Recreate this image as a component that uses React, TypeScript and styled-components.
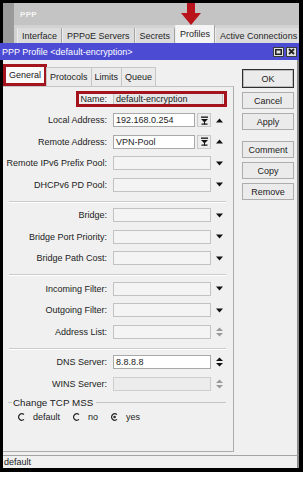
import React from "react";
import styled, { createGlobalStyle } from "styled-components";

const Global = createGlobalStyle`
  html, body { margin: 0; padding: 0; background: #ffffff; }
  body {
    font-family: "Liberation Sans", Arial, sans-serif;
    font-size: 9px;
    color: #222;
  }
  * { box-sizing: border-box; }
`;

const Frame = styled.div`
  position: relative;
  width: 303px;
  height: 472px;
  border: 3px solid #000;
  border-right-width: 4px;
  border-bottom-width: 4px;
  display: flex;
  flex-direction: column;
  background: #f0f0f0;
`;

const Header = styled.div`
  position: relative;
  display: flex;
  height: 40px;
  flex: none;
`;

const SideStrip = styled.div`
  width: 11px;
  background: #9a9a9a;
`;

const HeaderMain = styled.div`
  flex: 1;
  display: flex;
  flex-direction: column;
  background: #c4c4c4;
  overflow: hidden;
`;

const WinTitle = styled.div`
  height: 22px;
  display: flex;
  align-items: center;
  padding-left: 6px;
  color: #f4f4f4;
  font-weight: bold;
  font-size: 8px;
  letter-spacing: 0.3px;
`;

const MainTabs = styled.div`
  height: 18px;
  display: flex;
  align-items: flex-end;
  padding-left: 3px;
  background: #d2d2d2;
  white-space: nowrap;
`;

const MainTab = styled.div<{ $active?: boolean }>`
  height: ${(p) => (p.$active ? 18 : 15)}px;
  display: flex;
  align-items: center;
  padding: 0 4px;
  border-left: 1px solid #ececec;
  border-right: 1px solid #a4a4a4;
  background: ${(p) => (p.$active ? "#f4f4f4" : "#dcdcdc")};
  color: #262626;
  flex: none;
`;

const ArrowMark = styled.svg`
  position: absolute;
  left: 178px;
  top: 0;
`;

const DialogTitle = styled.div`
  height: 17px;
  flex: none;
  margin-left: -3px;
  background: #4b4bd4;
  color: #ffffff;
  display: flex;
  align-items: center;
  padding: 0 2px 0 2px;
`;

const TitleText = styled.span`
  flex: 1;
  white-space: nowrap;
`;

const WinButton = styled.div`
  width: 11px;
  height: 10px;
  border: 1px solid #3c3c3c;
  background: #e2e2e2;
  display: flex;
  align-items: center;
  justify-content: center;
  margin-left: 2px;
`;

const Body = styled.div`
  flex: 1;
  display: flex;
  min-height: 0;
  border-right: 2px solid #8c8c8c;
`;

const LeftPane = styled.div`
  width: 231px;
  flex: none;
  display: flex;
  flex-direction: column;
  padding-bottom: 3px;
`;

const DTabs = styled.div`
  display: flex;
  align-items: flex-end;
  height: 26px;
  flex: none;
`;

const DTab = styled.div<{ $selected?: boolean }>`
  display: flex;
  align-items: center;
  white-space: nowrap;
  height: ${(p) => (p.$selected ? 22 : 19)}px;
  padding: 0 3px;
  border: ${(p) => (p.$selected ? "3px solid #a3141f" : "1px solid #c6c6c6")};
  border-bottom: ${(p) => (p.$selected ? "3px solid #a3141f" : "none")};
  background: ${(p) => (p.$selected ? "#fbfbfb" : "#ebebeb")};
  margin-left: ${(p) => (p.$selected ? 0 : -1)}px;
`;

const Panel = styled.div`
  flex: 1;
  border-top: 1px solid #c4c4c4;
  border-right: 1px solid #acacac;
  border-bottom: 1px solid #acacac;
  padding-top: 1px;
  display: flex;
  flex-direction: column;
`;

const Row = styled.div`
  position: relative;
  display: flex;
  align-items: center;
  height: 21.5px;
  flex: none;
`;

const Label = styled.div`
  width: 104px;
  flex: none;
  text-align: right;
  white-space: nowrap;
`;

const FieldWrap = styled.div<{ $w: number }>`
  display: flex;
  margin-left: 6px;
  width: ${(p) => p.$w}px;
  gap: 2px;
  flex: none;
`;

type Tone = "white" | "empty" | "readonly" | "disabled";

const toneBg: Record<Tone, string> = {
  white: "#ffffff",
  empty: "#f4f4f4",
  readonly: "#e6e6e6",
  disabled: "#ececec",
};
const toneBorder: Record<Tone, string> = {
  white: "#a9a9a9",
  empty: "#c2c2c2",
  readonly: "#c2c2c2",
  disabled: "#cdcdcd",
};

const Field = styled.div<{ $tone: Tone }>`
  flex: 1;
  height: 14px;
  border: 1px solid ${(p) => toneBorder[p.$tone]};
  background: ${(p) => toneBg[p.$tone]};
  padding-left: 2px;
  display: flex;
  align-items: center;
  white-space: nowrap;
  color: #1c1c1c;
`;

const ListBtn = styled.div`
  width: 14px;
  height: 14px;
  flex: none;
  border: 1px solid #c8c8c8;
  background: #ececec;
  display: flex;
  align-items: center;
  justify-content: center;
`;

const Trail = styled.div`
  width: 7px;
  margin-left: 5px;
  flex: none;
  display: flex;
  align-items: center;
  justify-content: center;
`;

const Annot = styled.div`
  position: absolute;
  left: 73px;
  top: 3px;
  width: 151px;
  height: 16px;
  border: 3px solid #a3141f;
  pointer-events: none;
`;

const Sep = styled.div`
  height: 1px;
  flex: none;
  background: #cbcbcb;
  margin: 5px 7px 3px 6px;
  box-shadow: 0 1px 0 #ffffff;
`;

const GroupHead = styled.div`
  display: flex;
  align-items: center;
  height: 14px;
  flex: none;
  margin-top: 1px;
  padding: 0 7px 0 5px;
`;

const GroupLine = styled.div<{ $w?: number }>`
  height: 1px;
  background: #c6c6c6;
  ${(p) => (p.$w ? `width: ${p.$w}px; flex: none;` : "flex: 1;")}
`;

const GroupTitle = styled.span`
  margin: 0 3px 0 1px;
  font-size: 9.8px;
  white-space: nowrap;
`;

const RadioRow = styled.div`
  display: flex;
  align-items: center;
  height: 15px;
  padding-left: 15px;
  gap: 13px;
`;

const RadioItem = styled.div`
  display: flex;
  align-items: center;
  gap: 8px;
`;

const RightPane = styled.div`
  flex: 1;
  display: flex;
  flex-direction: column;
  padding: 9px 3px 0 8px;
`;

const Btn = styled.div<{ $default?: boolean; $gap?: number }>`
  width: 52px;
  height: ${(p) => (p.$default ? 19 : 17)}px;
  margin-top: ${(p) => p.$gap ?? 0}px;
  border: 1px solid ${(p) => (p.$default ? "#2e2e2e" : "#adadad")};
  box-shadow: ${(p) => (p.$default ? "inset 0 0 0 1px #bcbcbc" : "none")};
  background: #ebebeb;
  display: flex;
  align-items: center;
  justify-content: center;
  color: #222;
`;

const Status = styled.div`
  height: 13px;
  flex: none;
  border-top: 1px solid #a4a4a4;
  border-right: 2px solid #8c8c8c;
  padding-left: 1px;
  display: flex;
  align-items: center;
`;

const UpTri = ({ c = "#111" }: { c?: string }) => (
  <svg width="7" height="5" viewBox="0 0 7 5">
    <polygon points="0,4.5 7,4.5 3.5,0.5" fill={c} />
  </svg>
);

const DownTri = ({ c = "#111" }: { c?: string }) => (
  <svg width="7" height="5" viewBox="0 0 7 5">
    <polygon points="0,0.5 7,0.5 3.5,4.5" fill={c} />
  </svg>
);

const Spin = ({ c = "#111" }: { c?: string }) => (
  <svg width="7" height="10" viewBox="0 0 7 10">
    <polygon points="0,4 7,4 3.5,0.5" fill={c} />
    <polygon points="0,6 7,6 3.5,9.5" fill={c} />
  </svg>
);

const ListIcon = () => (
  <svg width="7" height="9" viewBox="0 0 7 9">
    <rect x="0" y="0.5" width="7" height="1.3" fill="#111" />
    <polygon points="0,3 7,3 3.5,6.5" fill="#111" />
    <rect x="3" y="6" width="1" height="2.5" fill="#111" />
    <rect x="0.5" y="7.5" width="6" height="1.2" fill="#111" />
  </svg>
);

const RadioMark = ({ on }: { on?: boolean }) => (
  <svg width="7" height="8" viewBox="0 0 7 8">
    <path d="M6 1.6 A3.2 3.2 0 1 0 6 6.4" fill="none" stroke="#2a2a2a" strokeWidth="1.2" />
    {on && <circle cx="3.6" cy="4" r="1.3" fill="#2a2a2a" />}
  </svg>
);

type RowDef =
  | { kind: "list"; label: string; value: string }
  | { kind: "drop"; label: string }
  | { kind: "spin"; label: string; value?: string; tone: Tone; dim?: boolean };

const groups: RowDef[][] = [
  [
    { kind: "list", label: "Local Address:", value: "192.168.0.254" },
    { kind: "list", label: "Remote Address:", value: "VPN-Pool" },
    { kind: "drop", label: "Remote IPv6 Prefix Pool:" },
    { kind: "drop", label: "DHCPv6 PD Pool:" },
  ],
  [
    { kind: "drop", label: "Bridge:" },
    { kind: "drop", label: "Bridge Port Priority:" },
    { kind: "drop", label: "Bridge Path Cost:" },
  ],
  [
    { kind: "drop", label: "Incoming Filter:" },
    { kind: "drop", label: "Outgoing Filter:" },
    { kind: "spin", label: "Address List:", tone: "empty", dim: true },
  ],
  [
    { kind: "spin", label: "DNS Server:", value: "8.8.8.8", tone: "white" },
    { kind: "spin", label: "WINS Server:", tone: "disabled", dim: true },
  ],
];

const FormRow = ({ def }: { def: RowDef }) => {
  if (def.kind === "list") {
    return (
      <Row>
        <Label>{def.label}</Label>
        <FieldWrap $w={98}>
          <Field $tone="white">{def.value}</Field>
          <ListBtn>
            <ListIcon />
          </ListBtn>
        </FieldWrap>
        <Trail>
          <UpTri />
        </Trail>
      </Row>
    );
  }
  if (def.kind === "drop") {
    return (
      <Row>
        <Label>{def.label}</Label>
        <FieldWrap $w={98}>
          <Field $tone="empty" />
        </FieldWrap>
        <Trail>
          <DownTri />
        </Trail>
      </Row>
    );
  }
  return (
    <Row>
      <Label>{def.label}</Label>
      <FieldWrap $w={98}>
        <Field $tone={def.tone}>{def.value}</Field>
      </FieldWrap>
      <Trail>
        <Spin c={def.dim ? "#9a9a9a" : "#111"} />
      </Trail>
    </Row>
  );
};

export default function App() {
  return (
    <>
      <Global />
      <Frame>
        <Header>
          <SideStrip />
          <HeaderMain>
            <WinTitle>PPP</WinTitle>
            <MainTabs>
              <MainTab>Interface</MainTab>
              <MainTab>PPPoE Servers</MainTab>
              <MainTab>Secrets</MainTab>
              <MainTab $active>Profiles</MainTab>
              <MainTab>Active Connections</MainTab>
            </MainTabs>
          </HeaderMain>
          <ArrowMark width="20" height="22" viewBox="0 0 20 22">
            <rect x="6" y="0" width="8" height="11" fill="#b8141a" />
            <polygon points="0,10 20,10 10,22" fill="#b8141a" />
          </ArrowMark>
        </Header>

        <DialogTitle>
          <TitleText>PPP Profile &lt;default-encryption&gt;</TitleText>
          <WinButton>
            <svg width="7" height="6" viewBox="0 0 7 6">
              <rect x="0.75" y="0.75" width="5.5" height="4.5" fill="none" stroke="#222" strokeWidth="1.5" />
            </svg>
          </WinButton>
          <WinButton>
            <svg width="7" height="7" viewBox="0 0 7 7">
              <path d="M1 1 L6 6 M6 1 L1 6" stroke="#222" strokeWidth="1.8" />
            </svg>
          </WinButton>
        </DialogTitle>

        <Body>
          <LeftPane>
            <DTabs>
              <DTab $selected>General</DTab>
              <DTab>Protocols</DTab>
              <DTab>Limits</DTab>
              <DTab>Queue</DTab>
            </DTabs>
            <Panel>
              <Row>
                <Label>Name:</Label>
                <FieldWrap $w={110}>
                  <Field $tone="readonly">default-encryption</Field>
                </FieldWrap>
                <Annot />
              </Row>
              {groups.map((g, gi) => (
                <React.Fragment key={gi}>
                  {gi > 0 && <Sep />}
                  {g.map((d) => (
                    <FormRow key={d.label} def={d} />
                  ))}
                </React.Fragment>
              ))}
              <GroupHead>
                <GroupLine $w={4} />
                <GroupTitle>Change TCP MSS</GroupTitle>
                <GroupLine />
              </GroupHead>
              <RadioRow>
                <RadioItem>
                  <RadioMark />
                  default
                </RadioItem>
                <RadioItem>
                  <RadioMark />
                  no
                </RadioItem>
                <RadioItem>
                  <RadioMark on />
                  yes
                </RadioItem>
              </RadioRow>
            </Panel>
          </LeftPane>
          <RightPane>
            <Btn $default>OK</Btn>
            <Btn $gap={4}>Cancel</Btn>
            <Btn $gap={4}>Apply</Btn>
            <Btn $gap={11}>Comment</Btn>
            <Btn $gap={4}>Copy</Btn>
            <Btn $gap={4}>Remove</Btn>
          </RightPane>
        </Body>
        <Status>default</Status>
      </Frame>
    </>
  );
}
